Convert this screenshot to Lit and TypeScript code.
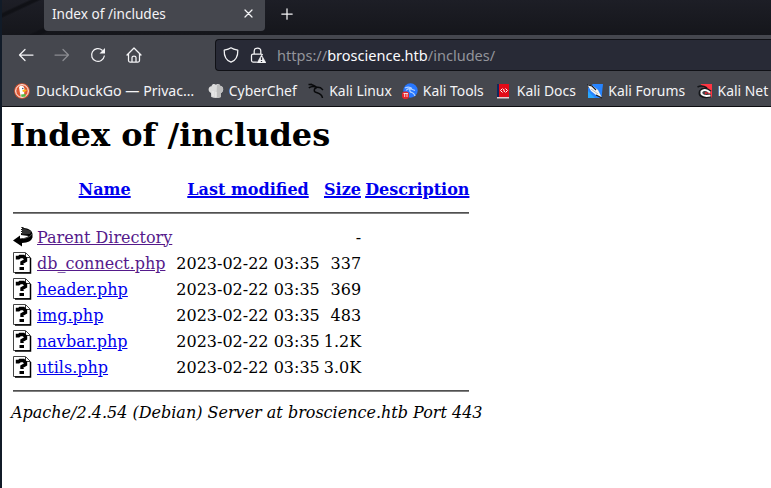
import { LitElement, html, css, svg } from "lit";
import { customElement } from "lit/decorators.js";

const icon = (body: unknown, w = 16, h = 16) =>
  html`<svg width=${w} height=${h} viewBox="0 0 ${w} ${h}" fill="none">${body}</svg>`;

const line = (d: string) =>
  svg`<path d=${d} stroke="#f4f4f6" stroke-width="1.25" stroke-linecap="round" stroke-linejoin="round"/>`;

const back = icon(line("M15 8H1.5M7 2.5L1.5 8L7 13.5"));
const forward = icon(line("M1 8H14.5M9 2.5L14.5 8L9 13.5"));
const reload = icon(svg`${line("M12.2 3.2A6.4 6.4 0 1 0 14.3 9")}<path d="M15 1V6.5H9.5Z" fill="#f4f4f6"/>`);
const home = icon(line("M1 8L8 1L15 8M2.5 7V13.5Q2.5 15 4 15H12Q13.5 15 13.5 13.5V7M6 15V10.5Q6 9 8 9T10 10.5V15"));
const shield = icon(line("M8 .8C10 2.3 12.500 2.800 14.800 3.200C15 9 12.500 13.500 8 15.200C3.500 13.500 1 9 1.200 3.200C3.500 2.800 6 2.300 8 .8Z"));
const lock = icon(svg`${line("M4.200 7V4Q4.200 1 7.500 1T10.800 4V7M6.500 15H3Q1.500 15 1.500 13.500V8.500Q1.500 7 3 7H11Q12 7 12.300 7.600")}
  <path d="M11.500 8L16 16H7Z" fill="#f4f4f6" stroke="#f4f4f6" stroke-width=".6" stroke-linejoin="round"/><path d="M11.500 10.300V13M11.500 14V15" stroke="#282a36" stroke-width="1.300"/>`);
const close = icon(line("M1 1L8 8M8 1L1 8"), 9, 9);
const plus = icon(line("M6 .8V11.200M.8 6H11.200"), 12, 12);

const duck = icon(svg`<circle cx="8" cy="8" r="7.800" fill="#de5833"/><circle cx="8" cy="8" r="6.300" fill="#de5833" stroke="#fff" stroke-width="1"/>
  <path d="M5 4Q7 2 9.500 3.500Q11 5 10.300 8L10 13.500L7 14Q5.500 9 5 4Z" fill="#fff"/><path d="M8.500 7Q11 6 13 7Q12 8.800 8.800 9Z" fill="#fdb913"/><path d="M7 11.500L11.500 11V13.500L7.500 14Z" fill="#55b947"/><circle cx="8.800" cy="5.500" r=".7" fill="#243b5a"/>`);
const chef = icon(svg`<path d="M3 10C-.5 8.500 0 3.500 3.500 3.300C4 .5 7 .8 7.800 1.800C9.500 .3 12 1 12.400 3C16 3 16 8.500 13 10V14Q8 16 3.200 14Z" fill="#dcdcdc"/><path d="M9 2Q12 .8 12.400 3C16 3 16 8.500 13 10V14Q11 15 8.500 15V10Z" fill="#bebebe"/><path d="M5 8V13M8 9V14" stroke="#eee"/>`);
const kali = icon(svg`<path d="M.5 1.500Q5 1 8.500 4M.8 4.800Q4 2.500 8.500 4L12.500 4.800L15 7M9 4.500Q5.500 5.500 6.500 8.500C8 10.500 13.500 9 14.500 15M2.500 1L7 3.500" stroke="#08090b" stroke-width="1.500" stroke-linejoin="round"/>`);
const tools = icon(svg`<circle cx="8.500" cy="7.500" r="7.200" fill="#2777ff"/><path d="M3 5Q7 3 10 5.500M4 7.500Q6 5 9 6L13 7.500M8 6Q7 9 10 9.500Q12 10 13 13" stroke="#b3d2ff" stroke-width="1.200"/><rect y="8.500" width="7" height="7.500" rx="3" fill="#e5252c"/><path d="M1.500 10.500H6M2.700 10.500V14M5 10.500V14" stroke="#fff" stroke-width=".8"/>`);
const docs = icon(svg`<path d="M1 1H3V14H1Z" fill="#10275d"/><path d="M3 1H13V14H3Z" fill="#e20a17"/><path d="M1 14H13V15.500H1Z" fill="#e4cdd0"/><path d="M6.500 5.500L4.500 7.500L6.500 9.500M9.500 5.500L11.500 7.500L9.500 9.500M7.500 6L8.500 9" stroke="#fff" stroke-width="1"/>`);
const forums = icon(svg`<path d="M1 15V5L6 1H16L14.500 15Z" fill="#2684ff"/><path d="M1 15V8L8 15Z" fill="#28a8ff"/><path d="M0 1L6 3L11 7L15 15L9 12L4 8Z" fill="#f4f4f4"/><path d="M0 1.500L5 3L9 7M9 12L15 15" stroke="#17191f" stroke-width="1.200"/><path d="M4 6L11 11" stroke="#aaa" stroke-width=".8"/>`);
const net = icon(svg`<path d="M3.500 1H15V15L10 9Z" fill="#ff3442"/><path d="M.5 4Q5 1.500 10 5" stroke="#15171b" stroke-width="1.600"/><path d="M14 12.500L9 13.500Q2 13.500 3.500 8.500Q7 4 13.500 9" stroke="#15171b" stroke-width="3.400"/><path d="M13.500 12.500L9.500 13Q3.500 12.500 4.500 8.500Q8 5 13 9.500" stroke="#fff" stroke-width="2"/><path d="M8 9Q10 8.500 10.500 10.500L8 11.500Z" fill="#dc2733"/>`);

const parentIcon = icon(svg`<path d="M8 1.500L10 1L11 2L14 2.500Q19 4 19.500 8V11.500Q18 16.500 9 17V20.500L0 14.500L7 9.500V12.500Q13 12 15.500 10L8 9Z" fill="#000"/><path d="M8.500 2L18.500 5L17 8L8.500 8.500Z" fill="#333"/><path d="M8.500 2V8" stroke="#fff" stroke-width="1" stroke-dasharray="1 1"/><path d="M10 12.700Q17 11.500 19 8" stroke="#999" stroke-width=".5"/>`, 20, 22);
const fileIcon = icon(svg`<path d="M.5 .5H12.500L17.500 5.500V20.500H.5Z" fill="#fff" stroke="#444"/><path d="M2 21H17.500V6" stroke="#000" stroke-width="1.500"/><path d="M12.500 1V5.500H17" stroke="#333"/><path d="M4.500 7.500V5.500H6L7 4.500H10.500L12.500 6.500V8.500L9 10.500V13" stroke="#000" stroke-width="3.400"/><path d="M6.500 15H11V18H6.500Z" fill="#000"/>`, 20, 22);

const bookmarks = [
  { label: "DuckDuckGo — Privac…", icon: duck },
  { label: "CyberChef", icon: chef },
  { label: "Kali Linux", icon: kali },
  { label: "Kali Tools", icon: tools },
  { label: "Kali Docs", icon: docs },
  { label: "Kali Forums", icon: forums },
  { label: "Kali Net", icon: net },
];

const files = [
  { name: "db_connect.php", size: "337", visited: true },
  { name: "header.php", size: "369" },
  { name: "img.php", size: "483" },
  { name: "navbar.php", size: "1.2K" },
  { name: "utils.php", size: "3.0K" },
];

@customElement("browser-chrome")
class BrowserChrome extends LitElement {
  static styles = css`
    :host { display: block; height: 107px; font-family: "Noto Sans", sans-serif; color: #f4f4f6; }
    svg { display: block; flex: none; }
    .tabs { display: flex; height: 35px; background: linear-gradient(155deg, transparent 11px, #101116 13px 15px, transparent 17px 42px, #101116 44px 47px, transparent 49px) 0 0 / 150px 35px no-repeat, linear-gradient(#1d1e26, #15161b); padding-left: 42px; box-sizing: border-box; }
    .tab { display: flex; align-items: center; justify-content: space-between; width: 221px; height: 31px; padding: 0 12px 4px 8px; box-sizing: border-box; background: #45474e; border-radius: 0 0 4px 4px; font-size: 13.6px; }
    .new { padding: 8px 0 0 16px; }
    .nav { display: flex; align-items: center; height: 40px; background: #45474e; padding-left: 16px; box-sizing: border-box; }
    .buttons { display: flex; gap: 20px; width: 197px; }
    .disabled { opacity: .4; }
    .url { flex: 1; display: flex; align-items: center; height: 32px; box-sizing: border-box; border: 1px solid #101116; border-right: 0; border-radius: 4px 0 0 4px; background: #282a36; padding-left: 7px; gap: 11px; font-size: 14.55px; color: #93949b; white-space: pre; }
    .host { color: #fbfbfe; }
    .marks { display: flex; align-items: center; height: 32px; box-sizing: border-box; background: #45474e; border-bottom: 1px solid #0c0c10; padding-left: 12px; gap: 11.5px; overflow: hidden; font-size: 13.9px; white-space: nowrap; }
    .mark { display: flex; align-items: center; gap: 5px; flex: none; }
    .mark:first-child { gap: 6px; margin-right: 2px; font-size: 14.15px; }
    .mark:nth-child(3) { margin-right: -1.5px; }
    .mark:nth-child(4) { margin-right: .5px; }
  `;
  render() {
    return html`
      <div class="tabs"><div class="tab"><span>Index of /includes</span>${close}</div><div class="new">${plus}</div></div>
      <div class="nav">
        <div class="buttons">${back}<span class="disabled">${forward}</span>${reload}${home}</div>
        <div class="url">${shield}${lock}<span>https://<span class="host">broscience.htb</span>/includes/</span></div>
      </div>
      <div class="marks">${bookmarks.map((b) => html`<div class="mark">${b.icon}<span>${b.label}</span></div>`)}</div>
    `;
  }
}

@customElement("directory-index")
class DirectoryIndex extends LitElement {
  static styles = css`
    :host { display: block; padding: 10px 8px; background: #fff; color: #000; font: 16px/19px "DejaVu Serif", serif; }
    h1 { margin: 0 0 21px; font-size: 32px; line-height: 37px; }
    table { border-spacing: 2px; border-collapse: separate; }
    th, td { padding: 1px; white-space: pre; }
    svg { display: block; }
    .blank { width: 20px; height: 22px; }
    a { color: #00e; text-decoration: underline; }
    th a { text-decoration-thickness: 2px; }
    .visited { color: #551a8b; }
    .right { text-align: right; }
    hr { margin: 8px 0; border: 0; height: 2px; background: linear-gradient(#505050 50%, #808080 50%); }
    address { font-style: italic; padding-left: 1px; }
  `;
  render() {
    return html`
      <h1>Index of /includes</h1>
      <table>
        <tr><th><div class="blank"></div></th><th><a>Name</a></th><th><a>Last modified</a></th><th><a>Size</a></th><th><a>Description</a></th></tr>
        <tr><th colspan="5"><hr></th></tr>
        <tr><td>${parentIcon}</td><td><a class="visited">Parent Directory</a></td><td></td><td class="right">-</td><td></td></tr>
        ${files.map((f) => html`<tr><td>${fileIcon}</td><td><a class=${f.visited ? "visited" : ""}>${f.name}</a></td><td class="right">2023-02-22 03:35</td><td class="right">${f.size}</td><td></td></tr>`)}
        <tr><th colspan="5"><hr></th></tr>
      </table>
      <address>Apache/2.4.54 (Debian) Server at broscience.htb Port 443</address>
    `;
  }
}

@customElement("app-root")
class AppRoot extends LitElement {
  static styles = css`
    :host { display: flex; flex-direction: column; height: 488px; box-sizing: border-box; overflow: hidden; border-left: 2px solid #111b28; }
    directory-index { flex: 1; }
  `;
  render() {
    return html`<browser-chrome></browser-chrome><directory-index></directory-index>`;
  }
}
